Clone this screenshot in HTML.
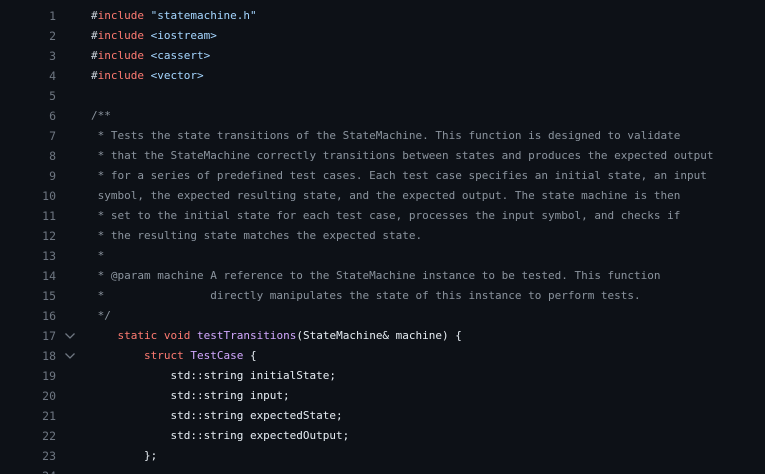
<!DOCTYPE html>
<html><head><meta charset="utf-8"><style>
html,body{margin:0;padding:0;background:#0d1117;width:765px;height:474px;overflow:hidden}
.c{position:relative;padding-top:8px;font-family:"DejaVu Sans Mono","Liberation Mono",monospace;font-size:11px;}
.l{height:20px;line-height:16px;position:relative;white-space:pre;color:#e6edf3}
.n{position:absolute;left:0;width:56px;text-align:right;color:#6e7681;font-size:11.5px}
.t{position:absolute;left:91px}
.v{position:absolute;left:64px;top:4px}
.k{color:#ff7b72}.s{color:#a5d6ff}.f{color:#d2a8ff}.m{color:#8b949e}
</style></head><body><div class="c">
<div class="l"><span class="n">1</span><span class="t"><span style="color:#c9d1d9">#</span><span class="k">include</span> <span class="s">"statemachine.h"</span></span></div>
<div class="l"><span class="n">2</span><span class="t"><span style="color:#c9d1d9">#</span><span class="k">include</span> <span class="s">&lt;iostream&gt;</span></span></div>
<div class="l"><span class="n">3</span><span class="t"><span style="color:#c9d1d9">#</span><span class="k">include</span> <span class="s">&lt;cassert&gt;</span></span></div>
<div class="l"><span class="n">4</span><span class="t"><span style="color:#c9d1d9">#</span><span class="k">include</span> <span class="s">&lt;vector&gt;</span></span></div>
<div class="l"><span class="n">5</span></div>
<div class="l"><span class="n">6</span><span class="t m">/**</span></div>
<div class="l"><span class="n">7</span><span class="t m"> * Tests the state transitions of the StateMachine. This function is designed to validate</span></div>
<div class="l"><span class="n">8</span><span class="t m"> * that the StateMachine correctly transitions between states and produces the expected output</span></div>
<div class="l"><span class="n">9</span><span class="t m"> * for a series of predefined test cases. Each test case specifies an initial state, an input</span></div>
<div class="l"><span class="n">10</span><span class="t m"> symbol, the expected resulting state, and the expected output. The state machine is then</span></div>
<div class="l"><span class="n">11</span><span class="t m"> * set to the initial state for each test case, processes the input symbol, and checks if</span></div>
<div class="l"><span class="n">12</span><span class="t m"> * the resulting state matches the expected state.</span></div>
<div class="l"><span class="n">13</span><span class="t m"> *</span></div>
<div class="l"><span class="n">14</span><span class="t m"> * @param machine A reference to the StateMachine instance to be tested. This function</span></div>
<div class="l"><span class="n">15</span><span class="t m"> *                directly manipulates the state of this instance to perform tests.</span></div>
<div class="l"><span class="n">16</span><span class="t m"> */</span></div>
<div class="l"><span class="n">17</span><svg class="v" width="12" height="8"><path d="M1.5 1.5l4.5 4.5 4.5-4.5" fill="none" stroke="#6e7681" stroke-width="1.3"/></svg><span class="t">    <span class="k">static</span> <span class="k">void</span> <span class="f">testTransitions</span>(StateMachine&amp; machine) {</span></div>
<div class="l"><span class="n">18</span><svg class="v" width="12" height="8"><path d="M1.5 1.5l4.5 4.5 4.5-4.5" fill="none" stroke="#6e7681" stroke-width="1.3"/></svg><span class="t">        <span class="k">struct</span> <span class="f">TestCase</span> {</span></div>
<div class="l"><span class="n">19</span><span class="t">            std::string initialState;</span></div>
<div class="l"><span class="n">20</span><span class="t">            std::string input;</span></div>
<div class="l"><span class="n">21</span><span class="t">            std::string expectedState;</span></div>
<div class="l"><span class="n">22</span><span class="t">            std::string expectedOutput;</span></div>
<div class="l"><span class="n">23</span><span class="t">        };</span></div>
<div class="l"><span class="n">24</span></div>
</div></body></html>
